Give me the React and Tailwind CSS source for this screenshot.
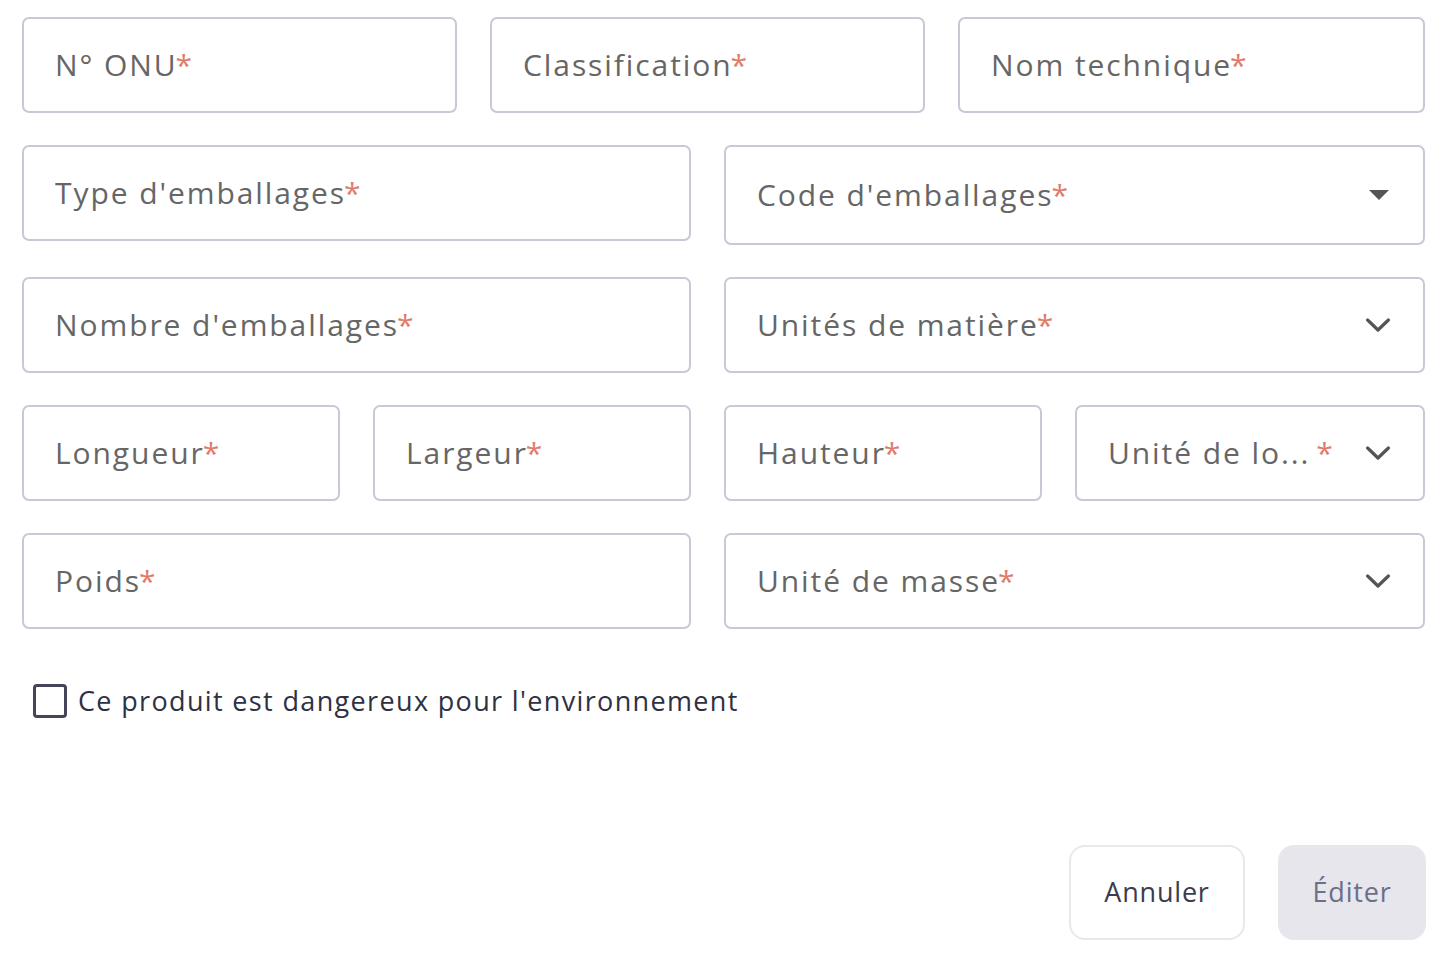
import React from 'react';

const font = { fontFamily: '"Open Sans", "Liberation Sans", sans-serif' };

function Label({ text }) {
  return (
    <span className="truncate text-[30px] leading-[40px] tracking-[0.064em] text-[#666666]">
      {text}
      <span className="-ml-[2px] tracking-normal text-[#e07b6a]">*</span>
    </span>
  );
}

function Field({ label, className = '' }) {
  return (
    <div className={`flex h-[96px] items-center rounded-[7px] border-2 border-[#c9c8d6] bg-white px-[31px] pb-[1px] ${className}`}>
      <Label text={label} />
    </div>
  );
}

function Chevron() {
  return (
    <svg width="24" height="16" viewBox="0 0 24 16" className="shrink-0">
      <path d="M1.6 3l10.4 10L22.4 3" fill="none" stroke="#555555" strokeWidth="3.2" strokeLinecap="round" strokeLinejoin="round" />
    </svg>
  );
}

function Caret() {
  return (
    <svg width="22" height="12" viewBox="0 0 22 12" className="shrink-0">
      <path d="M1 1h20L11 11z" fill="#555555" />
    </svg>
  );
}

function Select({ label, caret = false, truncated = false, tall = false }) {
  return (
    <div className={`flex ${tall ? 'h-[100px]' : 'h-[96px]'} items-center justify-between rounded-[7px] border-2 border-[#c9c8d6] bg-white pl-[31px] pr-[33px]`}>
      {truncated ? (
        <span className="flex items-baseline pb-[1px] text-[30px] leading-[40px] tracking-[0.064em] text-[#666666]">
          <span>{label}</span>
          <span className="ml-[6px] text-[#e07b6a]">*</span>
        </span>
      ) : (
        <span className="pb-[1px]">
          <Label text={label} />
        </span>
      )}
      {caret ? <Caret /> : <Chevron />}
    </div>
  );
}

export default function App() {
  return (
    <div className="min-h-screen bg-white" style={font}>
      <div className="flex w-[1403px] flex-col gap-[32px] pl-[22px] pt-[17px]">
        <div className="grid grid-cols-[435px_435px_467px] gap-x-[33px]">
          <Field label="N° ONU" />
          <Field label="Classification" />
          <Field label="Nom technique" />
        </div>

        <div className="grid grid-cols-[669px_701px] items-start gap-x-[33px]">
          <Field label="Type d'emballages" />
          <Select label="Code d'emballages" caret tall />
        </div>

        <div className="grid grid-cols-[669px_701px] gap-x-[33px]">
          <Field label="Nombre d'emballages" />
          <Select label="Unités de matière" />
        </div>

        <div className="grid grid-cols-[669px_701px] gap-x-[33px]">
          <div className="grid grid-cols-[318px_318px] gap-x-[33px]">
            <Field label="Longueur" />
            <Field label="Largeur" />
          </div>
          <div className="grid grid-cols-[318px_350px] gap-x-[33px]">
            <Field label="Hauteur" />
            <Select label="Unité de lo..." truncated />
          </div>
        </div>

        <div className="grid grid-cols-[669px_701px] gap-x-[33px]">
          <Field label="Poids" />
          <Select label="Unité de masse" />
        </div>
      </div>

      <label className="mt-[52px] flex items-center gap-[11px] pl-[33px]">
        <span className="h-[34px] w-[34px] rounded-[4px] border-[3px] border-[#44445a] bg-white" />
        <span className="text-[27px] tracking-[0.05em] text-[#2e3142]">Ce produit est dangereux pour l'environnement</span>
      </label>

      <div className="mt-[123px] flex w-[1426px] justify-end gap-[33px]">
        <button className="h-[95px] w-[176px] rounded-[16px] border-2 border-[#e8e8ee] bg-white text-[27px] font-medium tracking-[0.03em] text-[#3b3c50]">
          Annuler
        </button>
        <button className="h-[95px] w-[148px] rounded-[16px] bg-[#e6e6ec] text-[27px] font-medium tracking-[0.03em] text-[#6d6e88]">
          Éditer
        </button>
      </div>
    </div>
  );
}
